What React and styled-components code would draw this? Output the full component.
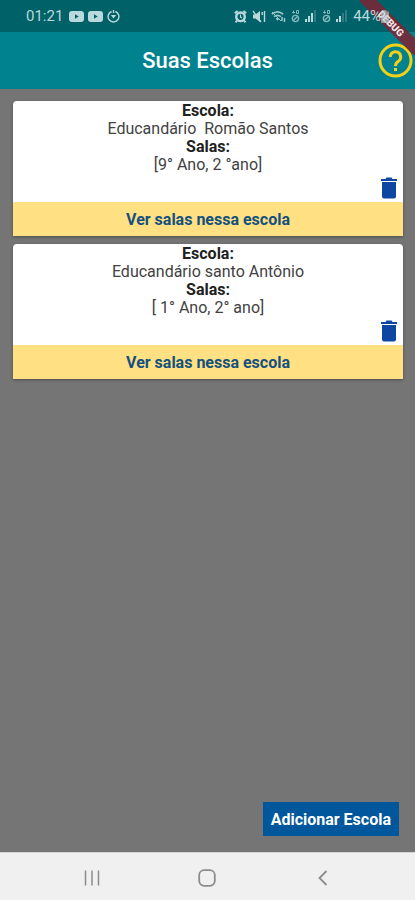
import React from "react";
import styled, { createGlobalStyle } from "styled-components";

const GlobalStyle = createGlobalStyle`
  * { box-sizing: border-box; }
  body { margin: 0; background: #757575; font-family: Roboto, "Liberation Sans", sans-serif; }
  button { font-family: inherit; border: 0; margin: 0; padding: 0; cursor: pointer; }
`;

const Screen = styled.div`
  position: relative;
  display: flex;
  flex-direction: column;
  min-height: 100vh;
  background: #757575;
`;

const StatusBar = styled.div`
  display: flex;
  align-items: center;
  justify-content: space-between;
  height: 32px;
  padding: 0 26px;
  background: #006168;
  color: #b9d9dc;
  font-size: 15px;
`;

const StatusGroup = styled.div`
  position: relative;
  z-index: 1;
  display: flex;
  align-items: center;
  gap: ${(p) => p.$gap}px;
  svg { display: block; flex: none; }
`;

const Clock = styled.span`
  margin-right: 2px;
`;

const Battery = styled.span`
  display: flex;
  align-items: center;
`;

const AppBar = styled.header`
  display: grid;
  grid-template-columns: 1fr auto 1fr;
  align-items: center;
  height: 57px;
  background: #00838f;
`;

const Title = styled.h1`
  grid-column: 2;
  margin: 0;
  color: #ffffff;
  font-size: 22px;
  font-weight: 500;
`;

const HelpButton = styled.button`
  justify-self: end;
  display: flex;
  background: none;
  margin-right: 2px;
`;

const Body = styled.main`
  flex: 1;
  display: flex;
  flex-direction: column;
  gap: 8px;
  padding: 12px 12px 16px 13px;
`;

const Card = styled.article`
  border-radius: 4px 4px 0 0;
  overflow: hidden;
  background: #ffffff;
  box-shadow: 0 1px 3px rgba(0, 0, 0, 0.35);
`;

const CardText = styled.div`
  padding-top: 1px;
  color: #424242;
  font-size: 16px;
  line-height: 18px;
  text-align: center;
  white-space: pre-wrap;
`;

const Label = styled.div`
  color: #212121;
  font-weight: 700;
`;

const CardActions = styled.div`
  display: flex;
  justify-content: flex-end;
  padding: 2px 4px 2px 0;
`;

const DeleteButton = styled.button`
  display: flex;
  background: none;
`;

const OpenButton = styled.button`
  display: block;
  width: 100%;
  height: 34px;
  background: #ffe082;
  color: #14507f;
  font-size: 16px;
  font-weight: 700;
`;

const AddButton = styled.button`
  align-self: flex-end;
  margin-top: auto;
  margin-right: 4px;
  height: 34px;
  padding: 0 8px;
  background: #01579b;
  color: #ffffff;
  font-size: 16px;
  font-weight: 700;
`;

const NavBar = styled.nav`
  display: grid;
  grid-template-columns: repeat(3, 1fr);
  align-items: center;
  height: 48px;
  border-top: 1px solid #d4d4d4;
  padding: 2px 34px 0;
  background: #f0f0f0;
`;

const NavButton = styled.button`
  display: flex;
  justify-content: center;
  background: none;
`;

const Corner = styled.div`
  position: absolute;
  top: 0;
  right: 0;
  width: 55px;
  height: 55px;
  overflow: hidden;
  pointer-events: none;
`;

const Ribbon = styled.div`
  position: absolute;
  top: 17px;
  left: -14px;
  width: 90px;
  height: 13px;
  transform: rotate(45deg);
  background: rgba(126, 35, 52, 0.85);
  color: #f3e4e6;
  font-size: 10px;
  font-weight: 900;
  line-height: 13px;
  text-align: center;
`;

const VideoIcon = () => (
  <svg width="15" height="11" viewBox="0 0 15 11">
    <rect width="15" height="11" rx="3" fill="#b9d9dc" />
    <path d="M6 3.2 9.7 5.5 6 7.8Z" fill="#006168" />
  </svg>
);

const SyncIcon = () => (
  <svg width="13" height="13" viewBox="0 0 13 13" fill="none" stroke="#b9d9dc">
    <path d="M8.4 1.5A5.4 5.4 0 1 1 4.6 1.5" strokeWidth="1.4" />
    <path d="M6.5 0v3" strokeWidth="1.4" />
    <path d="M3.8 5h5.4L6.5 8.6Z" fill="#b9d9dc" stroke="none" />
  </svg>
);

const AlarmIcon = () => (
  <svg width="13" height="13" viewBox="0 0 13 13" fill="none" stroke="#b9d9dc">
    <path d="M.8 3.2 3.6.9M12.2 3.2 9.4.9M1.5 12.2 3 10.7M11.5 12.2 10 10.7" strokeWidth="2" />
    <circle cx="6.5" cy="6.8" r="4.3" strokeWidth="2.4" />
    <path d="M6.5 4.6v2.5l1.5.8" strokeWidth="1.1" />
  </svg>
);

const MuteIcon = () => (
  <svg width="14" height="13" viewBox="0 0 14 13" fill="none" stroke="#b9d9dc">
    <path d="M1 4.5h2.500L8 1v11L3.500 8.500H1Z" fill="#b9d9dc" stroke="none" />
    <path d="M1 1l8 11" strokeWidth="1.300" />
    <path d="M10.200 2v3M12.500 1v11" strokeWidth="1.400" />
  </svg>
);

const WifiIcon = () => (
  <svg width="15" height="13" viewBox="0 0 15 13" fill="none" stroke="#9cc8cc">
    <path d="M.8 4.200Q6.500-.4 12.200 4.200M3 6.700Q6.500 4 10 6.700" strokeWidth="1.600" />
    <path d="M4.600 8.500Q6.500 7 8.400 8.500L6.500 10.700Z" fill="#9cc8cc" stroke="none" />
    <path d="M1 2l9 9" strokeWidth="1" />
    <path d="M11 7v4M13.500 8v4" strokeWidth="1.500" />
  </svg>
);

const SimIcon = () => (
  <svg width="9" height="14" viewBox="0 0 9 14" fill="none" stroke="#82b8bd">
    <path d="M1 3.500h3M2.500 1.500v3M5.500 1.500h2v3h-2Z" strokeWidth="1" />
    <circle cx="4.500" cy="9.500" r="3.100" strokeWidth="1.400" />
    <path d="M2.500 11.500 6.500 7.500" strokeWidth="1.200" />
  </svg>
);

const SignalIcon = ({ bars }) => (
  <svg width="12" height="12" viewBox="0 0 12 12">
    {[0, 1, 2, 3].map((i) => (
      <rect
        key={i}
        x={i * 3}
        y={9 - i * 3}
        width="2"
        height={3 + i * 3}
        fill={i < bars ? "#b9d9dc" : "#2f7d84"}
      />
    ))}
  </svg>
);

const BatteryIcon = () => (
  <svg width="8" height="13" viewBox="0 0 8 13" fill="#b9d9dc" fillOpacity="0.6">
    <path d="M2.500 0h3v1.500H8V13H0V1.500H2.500Z" />
  </svg>
);

const HelpIcon = () => (
  <svg width="35" height="35" viewBox="0 0 35 35" fill="none" stroke="#f6cf17">
    <circle cx="17.500" cy="17.500" r="15.500" strokeWidth="3" />
    <path
      d="M12.300 14A5.200 5.200 0 1 1 20.900 17.900C19 19.300 17.500 20 17.500 23"
      strokeWidth="3"
    />
    <rect x="16" y="25" width="3" height="3" fill="#f6cf17" stroke="none" />
  </svg>
);

const TrashIcon = () => (
  <svg width="20" height="24" viewBox="0 0 20 24" fill="#0d47a1">
    <path d="M2 3H6.500L7.500 1.500H12.500L13.500 3H18V5H2Z" />
    <path d="M3 6H17V20.500Q17 22.500 15 22.500H5Q3 22.500 3 20.500Z" />
  </svg>
);

const RecentsIcon = () => (
  <svg width="16" height="16" viewBox="0 0 16 16" stroke="#8c8c8c" strokeWidth="1.500">
    <path d="M1.500.5v15M8 .5v15M14.500.5v15" />
  </svg>
);

const HomeIcon = () => (
  <svg width="18" height="18" viewBox="0 0 18 18" fill="none" stroke="#8c8c8c" strokeWidth="1.800">
    <rect x="1.200" y="1.200" width="15.600" height="15.600" rx="5" />
  </svg>
);

const BackIcon = () => (
  <svg width="10" height="16" viewBox="0 0 10 16" fill="none" stroke="#8c8c8c" strokeWidth="1.800">
    <path d="M8.500 1 1.500 8l7 7" />
  </svg>
);

const schools = [
  { name: "Educandário  Romão Santos", rooms: "[9° Ano, 2 °ano]" },
  { name: "Educandário santo Antônio", rooms: "[ 1° Ano, 2° ano]" },
];

const SchoolCard = ({ name, rooms }) => (
  <Card>
    <CardText>
      <Label>Escola:</Label>
      <div>{name}</div>
      <Label>Salas:</Label>
      <div>{rooms}</div>
    </CardText>
    <CardActions>
      <DeleteButton aria-label={`Excluir ${name}`}>
        <TrashIcon />
      </DeleteButton>
    </CardActions>
    <OpenButton>Ver salas nessa escola</OpenButton>
  </Card>
);

export default function App() {
  return (
    <>
      <GlobalStyle />
      <Screen>
        <StatusBar>
          <StatusGroup $gap={4}>
            <Clock>01:21</Clock>
            <VideoIcon />
            <VideoIcon />
            <SyncIcon />
          </StatusGroup>
          <StatusGroup $gap={5}>
            <AlarmIcon />
            <MuteIcon />
            <WifiIcon />
            <SimIcon />
            <SignalIcon bars={3} />
            <SimIcon />
            <SignalIcon bars={2} />
            <Battery>
              44%
              <BatteryIcon />
            </Battery>
          </StatusGroup>
        </StatusBar>
        <AppBar>
          <Title>Suas Escolas</Title>
          <HelpButton aria-label="Ajuda">
            <HelpIcon />
          </HelpButton>
        </AppBar>
        <Body>
          {schools.map((school) => (
            <SchoolCard key={school.name} {...school} />
          ))}
          <AddButton>Adicionar Escola</AddButton>
        </Body>
        <NavBar>
          <NavButton aria-label="Recentes">
            <RecentsIcon />
          </NavButton>
          <NavButton aria-label="Início">
            <HomeIcon />
          </NavButton>
          <NavButton aria-label="Voltar">
            <BackIcon />
          </NavButton>
        </NavBar>
        <Corner>
          <Ribbon>DEBUG</Ribbon>
        </Corner>
      </Screen>
    </>
  );
}
